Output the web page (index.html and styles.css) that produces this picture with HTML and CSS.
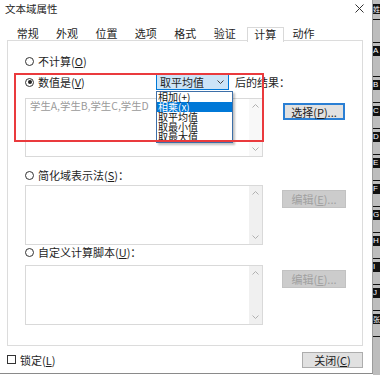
FILE: index.html
```html
<!DOCTYPE html>
<html lang="zh-CN">
<head>
    <meta charset="UTF-8">
    <link rel="stylesheet" href="styles.css">
</head>
<body>
<div class="screen">
    <div class="dialog">
        <div class="title-bar">
            <span class="title">文本域属性</span>
            <svg class="close-x" width="9" height="9" viewBox="0 0 9 9">
                <path d="M0.5 0.5 L8.5 8.5 M8.5 0.5 L0.5 8.5" stroke="#333" stroke-width="1" fill="none"/>
            </svg>
        </div>
        <div class="tabs">
            <div class="tab">常规</div>
            <div class="tab">外观</div>
            <div class="tab">位置</div>
            <div class="tab">选项</div>
            <div class="tab">格式</div>
            <div class="tab">验证</div>
            <div class="tab active">计算</div>
            <div class="tab">动作</div>
        </div>
        <div class="panel">
            <div class="option-row">
                <span class="radio"></span>
                <span>不计算(<u>O</u>)</span>
            </div>
            <div class="option-row value-row">
                <span class="radio checked"></span>
                <span class="value-label">数值是(<u>V</u>)</span>
                <div class="combo">
                    <span>取平均值</span>
                    <svg class="combo-arrow" width="7" height="4" viewBox="0 0 7 4">
                        <path d="M0.5 0.5 L3.5 3.5 L6.5 0.5" stroke="#444" stroke-width="1" fill="none"/>
                    </svg>
                    <div class="combo-list">
                        <div class="combo-item">相加(+)</div>
                        <div class="combo-item selected">相乘(x)</div>
                        <div class="combo-item">取平均值</div>
                        <div class="combo-item">取最小值</div>
                        <div class="combo-item">取最大值</div>
                    </div>
                </div>
                <span class="after-label">后的结果：</span>
            </div>
            <div class="field-row first-field">
                <div class="field">
                    <span class="placeholder">学生A,学生B,学生C,学生D</span>
                    <div class="scroll light">
                        <svg width="7" height="4" viewBox="0 0 7 4"><path d="M0.5 3.5 L3.5 0.5 L6.5 3.5" stroke="#b0b0b0" fill="none"/></svg>
                        <svg width="7" height="4" viewBox="0 0 7 4"><path d="M0.5 0.5 L3.5 3.5 L6.5 0.5" stroke="#b0b0b0" fill="none"/></svg>
                    </div>
                </div>
                <button class="btn default-btn">选择(<u>P</u>)...</button>
            </div>
            <div class="option-row gap-large">
                <span class="radio"></span>
                <span>简化域表示法(<u>S</u>)：</span>
            </div>
            <div class="field-row near">
                <div class="field">
                    <div class="scroll">
                        <svg width="7" height="4" viewBox="0 0 7 4"><path d="M0.5 3.5 L3.5 0.5 L6.5 3.5" stroke="#b0b0b0" fill="none"/></svg>
                        <svg width="7" height="4" viewBox="0 0 7 4"><path d="M0.5 0.5 L3.5 3.5 L6.5 0.5" stroke="#b0b0b0" fill="none"/></svg>
                    </div>
                </div>
                <button class="btn disabled-btn" disabled>编辑(<u>E</u>)...</button>
            </div>
            <div class="option-row">
                <span class="radio"></span>
                <span>自定义计算脚本(<u>U</u>)：</span>
            </div>
            <div class="field-row">
                <div class="field">
                    <div class="scroll">
                        <svg width="7" height="4" viewBox="0 0 7 4"><path d="M0.5 3.5 L3.5 0.5 L6.5 3.5" stroke="#b0b0b0" fill="none"/></svg>
                        <svg width="7" height="4" viewBox="0 0 7 4"><path d="M0.5 0.5 L3.5 3.5 L6.5 0.5" stroke="#b0b0b0" fill="none"/></svg>
                    </div>
                </div>
                <button class="btn disabled-btn" disabled>编辑(<u>E</u>)...</button>
            </div>
            <div class="annotation"></div>
        </div>
        <div class="footer">
            <label class="lock"><span class="checkbox"></span>锁定(<u>L</u>)</label>
            <button class="btn close-btn">关闭(<u>C</u>)</button>
        </div>
    </div>
    <div class="sheet">
        <div class="sheet-row top"><span class="cell-label cjk">姓</span></div>
        <div class="sheet-row blank"></div>
        <div class="sheet-row tall"><span class="cell-label">A</span></div>
        <div class="sheet-row"><span class="cell-label">B</span></div>
        <div class="sheet-row"><span class="cell-label">C</span></div>
        <div class="sheet-row"><span class="cell-label">D</span></div>
        <div class="sheet-row"><span class="cell-label">E</span></div>
        <div class="sheet-row"><span class="cell-label">F</span></div>
        <div class="sheet-row"><span class="cell-label">G</span></div>
        <div class="sheet-row"><span class="cell-label">H</span></div>
        <div class="sheet-row"><span class="cell-label">I</span></div>
        <div class="sheet-row"><span class="cell-label">J</span></div>
        <div class="sheet-row"><span class="cell-label cjk">张</span></div>
    </div>
</div>
</body>
</html>
```

FILE: styles.css
```css
* {
    box-sizing: border-box;
}

body {
    margin: 0;
    background-color: #ffffff;
    font-family: "Noto Sans CJK SC", "Noto Sans", sans-serif;
    font-size: 11px;
    color: #1e1e1e;
}

u {
    text-decoration: underline;
}

.screen {
    display: flex;
    width: 380px;
    height: 375px;
    overflow: hidden;
}

.dialog {
    display: flex;
    flex-direction: column;
    width: 373px;
    height: 374px;
    background-color: #ffffff;
    border-right: 1px solid #9c9c9c;
    border-bottom: 1px solid #8a8a8a;
}

.title-bar {
    display: flex;
    justify-content: space-between;
    height: 26px;
    padding: 2px 8px 0 5px;
}

.title {
    font-size: 10.5px;
    line-height: 14px;
}

.close-x {
    margin-top: 2px;
}

.tabs {
    position: relative;
    z-index: 2;
    display: flex;
    height: 14px;
    padding-left: 8px;
}

.tab {
    width: 39.4px;
    text-align: center;
    line-height: 15px;
    white-space: nowrap;
}

.tab.active {
    width: 36.8px;
    height: 15px;
    margin-top: 1px;
    margin-left: 2.6px;
    background-color: #ffffff;
    border: 1px solid #d9d9d9;
    border-bottom: none;
    line-height: 13px;
}

.panel {
    position: relative;
    display: flex;
    flex-direction: column;
    height: 306px;
    margin: 0 9px 0 7px;
    padding: 13px 0 0 17px;
    border: 1px solid #dcdcdc;
}

.option-row {
    display: flex;
    align-items: center;
    height: 14px;
    line-height: 14px;
    white-space: nowrap;
}

.radio {
    width: 9px;
    height: 9px;
    margin-right: 4px;
    border: 1px solid #333333;
    border-radius: 50%;
    background-color: #ffffff;
}

.radio.checked {
    padding: 1.5px;
}

.radio.checked::after {
    content: "";
    display: block;
    width: 4px;
    height: 4px;
    border-radius: 50%;
    background-color: #222222;
}

.value-row {
    height: 16px;
    margin-top: 6px;
}

.value-label {
    width: 118px;
}

.combo {
    position: relative;
    display: flex;
    align-items: center;
    justify-content: space-between;
    width: 73px;
    height: 16px;
    padding: 0 4px 0 3px;
    background-color: #cce4f7;
    border: 1px solid #0078d7;
}

.combo-list {
    position: absolute;
    left: -1px;
    top: 16px;
    z-index: 3;
    width: 77px;
    background-color: #ffffff;
    border: 1px solid #3d6fa8;
    box-shadow: 2px 2px 2px rgba(0, 0, 0, 0.25);
}

.combo-item {
    height: 10px;
    padding-left: 1px;
    font-size: 10px;
    line-height: 10px;
    color: #111111;
}

.combo-item.selected {
    background-color: #0078d7;
    color: #ffffff;
}

.after-label {
    margin-left: 6px;
}

.field-row {
    display: flex;
    align-items: flex-start;
    margin-top: 6px;
}

.first-field {
    margin-top: 8px;
}

.near {
    margin-top: 3px;
}

.gap-large {
    margin-top: 11px;
}

.field {
    position: relative;
    display: flex;
    justify-content: space-between;
    width: 238px;
    height: 60px;
    background-color: #ffffff;
    border: 1px solid #d9d9d9;
}

.first-field .field {
    height: 59px;
}

.placeholder {
    padding: 0 0 0 4px;
    font-size: 10.4px;
    line-height: 13px;
    color: #9a9a9a;
    white-space: nowrap;
}

.scroll {
    display: flex;
    flex-direction: column;
    justify-content: space-between;
    align-items: center;
    width: 13px;
    margin-left: auto;
    padding: 5px 0 5px;
    background-color: #f0f0f0;
}

.scroll.light {
    background-color: #f8f8f8;
}

.btn {
    font-family: "Noto Sans CJK SC", "Noto Sans", sans-serif;
    font-size: 11px;
    line-height: 12px;
    padding: 0;
    color: #1e1e1e;
    background-color: #e1e1e1;
    border: 1px solid #adadad;
}

.default-btn {
    width: 62px;
    height: 17px;
    margin: 5px 0 0 20px;
    border: 2px solid #2a7fd4;
}

.disabled-btn {
    width: 64px;
    height: 18px;
    margin: 5px 0 0 19px;
    color: #a0a0a0;
    background-color: #cccccc;
    border-color: #c2c2c2;
}

.annotation {
    position: absolute;
    left: 6px;
    top: 32px;
    z-index: 4;
    width: 250px;
    height: 69px;
    border: 2px solid #ea3a3d;
    pointer-events: none;
}

.footer {
    display: flex;
    flex: 1;
    align-items: center;
    justify-content: space-between;
    padding: 0 9px 0 7px;
}

.lock {
    display: flex;
    align-items: center;
    line-height: 14px;
}

.checkbox {
    width: 9px;
    height: 9px;
    margin-right: 4px;
    border: 1px solid #333333;
}

.close-btn {
    width: 61px;
    height: 16px;
    margin-top: 1px;
}

.sheet {
    display: flex;
    flex-direction: column;
    width: 7px;
    height: 375px;
    background-color: #bdbdbd;
}

.sheet-row {
    height: 26px;
    padding-top: 3px;
    border-bottom: 1px solid #111111;
}

.sheet-row.top {
    height: 20px;
    padding-top: 4px;
}

.sheet-row.blank {
    height: 23px;
}

.sheet-row.tall {
    height: 34px;
}

.cell-label {
    display: block;
    height: 10px;
    font-family: "Liberation Sans", "Noto Sans CJK SC", sans-serif;
    font-size: 8px;
    line-height: 10px;
    color: #ffffff;
    background-color: #111111;
    overflow: hidden;
}

.cell-label.cjk {
    font-family: "Noto Sans CJK SC", sans-serif;
    font-size: 7px;
}
```
